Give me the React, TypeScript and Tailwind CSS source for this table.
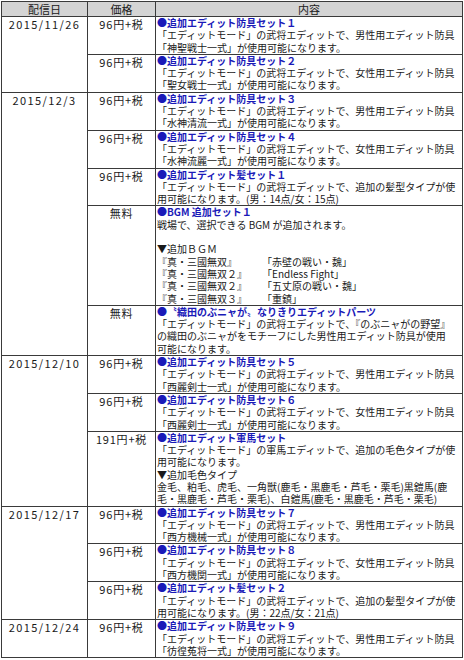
import React from "react";

type Row = {
  date?: string;
  span?: number;
  price: string;
  title: string;
  lines: React.ReactNode[];
};

const rows: Row[] = [
  {
    date: "2015/11/26",
    span: 2,
    price: "96円+税",
    title: "●追加エディット防具セット１",
    lines: ["「エディットモード」の武将エディットで、男性用エディット防具", "「神聖戦士一式」が使用可能になります。"],
  },
  {
    price: "96円+税",
    title: "●追加エディット防具セット２",
    lines: ["「エディットモード」の武将エディットで、女性用エディット防具", "「聖女戦士一式」が使用可能になります。"],
  },
  {
    date: "2015/12/3",
    span: 5,
    price: "96円+税",
    title: "●追加エディット防具セット３",
    lines: ["「エディットモード」の武将エディットで、男性用エディット防具", "「水神清流一式」が使用可能になります。"],
  },
  {
    price: "96円+税",
    title: "●追加エディット防具セット４",
    lines: ["「エディットモード」の武将エディットで、女性用エディット防具", "「水神流麗一式」が使用可能になります。"],
  },
  {
    price: "96円+税",
    title: "●追加エディット髪セット１",
    lines: ["「エディットモード」の武将エディットで、追加の髪型タイプが使", "用可能になります。(男：14点/女：15点)"],
  },
  {
    price: "無料",
    title: "●BGM 追加セット１",
    lines: [
      "戦場で、選択できる BGM が追加されます。",
      "\u00a0",
      "▼追加ＢＧＭ",
      <Bgm key="b1" a="『真・三國無双』" b="「赤壁の戦い・魏」" />,
      <Bgm key="b2" a="『真・三國無双２』" b="「Endless Fight」" />,
      <Bgm key="b3" a="『真・三國無双２』" b="「五丈原の戦い・魏」" />,
      <Bgm key="b4" a="『真・三國無双３』" b="「重鎮」" />,
    ],
  },
  {
    price: "無料",
    title: "●〝織田のぶニャが〟なりきりエディットパーツ",
    lines: [
      "「エディットモード」の武将エディットで、『のぶニャがの野望』",
      "の織田のぶニャがをモチーフにした男性用エディット防具が使用",
      "可能になります。",
    ],
  },
  {
    date: "2015/12/10",
    span: 3,
    price: "96円+税",
    title: "●追加エディット防具セット５",
    lines: ["「エディットモード」の武将エディットで、男性用エディット防具", "「西麗剣士一式」が使用可能になります。"],
  },
  {
    price: "96円+税",
    title: "●追加エディット防具セット６",
    lines: ["「エディットモード」の武将エディットで、女性用エディット防具", "「西麗剣士一式」が使用可能になります。"],
  },
  {
    price: "191円+税",
    title: "●追加エディット軍馬セット",
    lines: [
      "「エディットモード」の軍馬エディットで、追加の毛色タイプが使",
      "用可能になります。",
      "▼追加毛色タイプ",
      "金毛、粕毛、虎毛、一角獣(鹿毛・黒鹿毛・芦毛・栗毛)黒鎧馬(鹿",
      "毛・黒鹿毛・芦毛・栗毛)、白鎧馬(鹿毛・黒鹿毛・芦毛・栗毛)",
    ],
  },
  {
    date: "2015/12/17",
    span: 3,
    price: "96円+税",
    title: "●追加エディット防具セット７",
    lines: ["「エディットモード」の武将エディットで、男性用エディット防具", "「西方機械一式」が使用可能になります。"],
  },
  {
    price: "96円+税",
    title: "●追加エディット防具セット８",
    lines: ["「エディットモード」の武将エディットで、女性用エディット防具", "「西方機関一式」が使用可能になります。"],
  },
  {
    price: "96円+税",
    title: "●追加エディット髪セット２",
    lines: ["「エディットモード」の武将エディットで、追加の髪型タイプが使", "用可能になります。(男：22点/女：21点)"],
  },
  {
    date: "2015/12/24",
    span: 1,
    price: "96円+税",
    title: "●追加エディット防具セット９",
    lines: ["「エディットモード」の武将エディットで、男性用エディット防具", "「彷徨菟将一式」が使用可能になります。"],
  },
];

function Bgm({ a, b }: { a: string; b: string }) {
  return (
    <div className="grid grid-cols-[105px_1fr]">
      <span>{a}</span>
      <span>{b}</span>
    </div>
  );
}

const font = "font-['Noto_Sans_CJK_JP',sans-serif]";

export default function App() {
  return (
    <div className={`w-[464px] h-[660px] bg-white ${font} text-[#1a1a1a]`}>
      <div className="pt-px pl-px">
        <table className="border-collapse table-fixed w-[461px]">
          <colgroup>
            <col className="w-[86px]" />
            <col className="w-[68px]" />
            <col className="w-[307px]" />
          </colgroup>
          <thead>
            <tr className="bg-[#d4d4d4]">
              <th className="border border-[#3a3a3a] h-[15px] p-0 text-[11px] leading-[13px] font-normal text-center">配信日</th>
              <th className="border border-[#3a3a3a] h-[15px] p-0 text-[11px] leading-[13px] font-normal text-center">価格</th>
              <th className="border border-[#3a3a3a] h-[15px] p-0 text-[11px] leading-[13px] font-normal text-center">内容</th>
            </tr>
          </thead>
          <tbody>
            {rows.map((r, i) => (
              <tr key={i}>
                {r.date && (
                  <td
                    rowSpan={r.span}
                    className="border border-[#3a3a3a] p-0 align-top text-center text-[11px] leading-[13px] tracking-[1.4px] pt-[1px]"
                  >
                    {r.date}
                  </td>
                )}
                <td className="border border-[#3a3a3a] p-0 align-top text-center text-[11px] leading-[13px] tracking-[0.8px] pt-[1px]">
                  {r.price}
                </td>
                <td className="border border-[#3a3a3a] px-[1px] py-0 align-top text-[10px] leading-[12.3px] whitespace-nowrap overflow-hidden">
                  <div className="font-bold text-[#1a1ab8]">{r.title}</div>
                  {r.lines.map((l, j) =>
                    typeof l === "string" ? <div key={j}>{l}</div> : l
                  )}
                </td>
              </tr>
            ))}
          </tbody>
        </table>
      </div>
    </div>
  );
}
